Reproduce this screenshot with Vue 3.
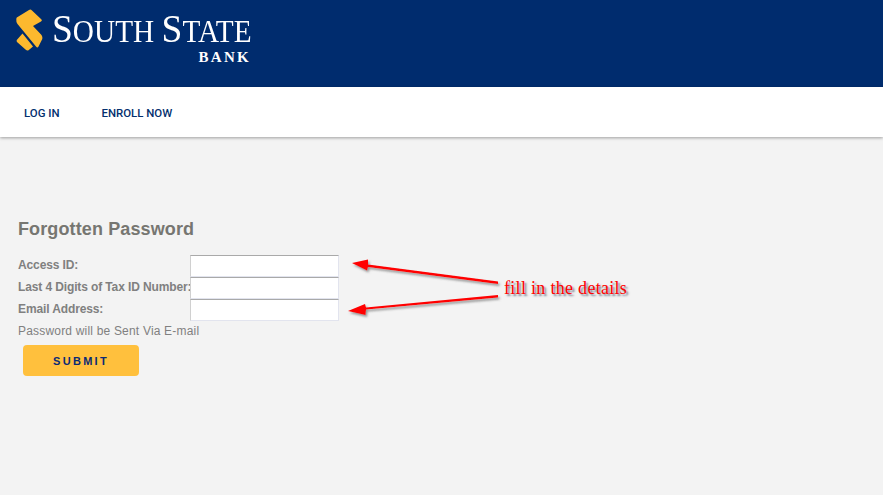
<script setup>
const fields = [
  { label: 'Access ID:', id: 'access' },
  { label: 'Last 4 Digits of Tax ID Number:', id: 'tax' },
  { label: 'Email Address:', id: 'email' }
]
</script>

<template>
  <div class="page">
    <header class="banner">
      <div class="logo">
        <svg class="mark" width="28" height="42" viewBox="0 0 28 42" aria-hidden="true">
          <path d="M0.800 8.500 L13 1 Q14.500 0 16 1.500 L25.500 10.500 Q26.500 11.500 25 12.500 L17 17 L25.500 26 Q26.800 28 26.300 30 L22.500 37.500 Q21.500 39.500 20 37.500 L1.500 15 Q0 13 0.300 10.500 Q0.300 9 0.800 8.500 Z" fill="#fdb92e"/>
          <path d="M0.800 31 L6.500 24.500 L17 37.500 L12.500 41.300 Q11 42 9.500 40.500 L1 33 Q0.300 32 0.800 31 Z" fill="#fdb92e"/>
        </svg>
        <div class="wordmark">
          <div class="name"><span class="cap">S</span>OUTH <span class="cap">S</span>TATE</div>
          <div class="bank">BANK</div>
        </div>
      </div>
    </header>
    <nav class="nav">
      <a class="nav-link">LOG IN</a>
      <a class="nav-link">ENROLL NOW</a>
    </nav>
    <main class="content">
      <h1 class="title">Forgotten Password</h1>
      <form class="form" @submit.prevent>
        <div v-for="f in fields" :key="f.id" class="row">
          <label class="label" :for="f.id">{{ f.label }}</label>
          <input :id="f.id" class="input" type="text" />
        </div>
      </form>
      <p class="note">Password will be Sent Via E-mail</p>
      <button class="submit" type="button">SUBMIT</button>
    </main>

    <svg class="arrows" width="883" height="495" viewBox="0 0 883 495" aria-hidden="true">
      <defs>
        <filter id="sh" x="-10%" y="-50%" width="120%" height="220%">
          <feDropShadow dx="1.500" dy="2" stdDeviation="1.200" flood-color="#555" flood-opacity="0.6"/>
        </filter>
      </defs>
      <g fill="#ff0000" stroke="none" filter="url(#sh)">
        <path d="M498 284 L368 267 L367 270.500 L352 263 L368 259.500 L368 264.500 L498 281.500 Z"/>
        <path d="M498 297.500 L366 309.500 L365.500 315 L348 311 L365 304 L366 307.500 L498 295 Z"/>
      </g>
    </svg>
    <div class="annotation">fill in the details</div>
  </div>
</template>

<style scoped>
.page {
  position: relative;
  width: 883px;
  height: 495px;
  overflow: hidden;
  background: #f3f3f3;
  font-family: "Liberation Sans", Arial, sans-serif;
}
.banner {
  height: 87px;
  background: #002c6e;
  padding: 9px 0 0 16px;
  box-sizing: border-box;
}
.logo {
  display: flex;
  align-items: flex-start;
  gap: 8px;
}
.mark {
  display: block;
  flex: none;
}
.wordmark {
  width: 198px;
  color: #fff;
  font-family: "Liberation Serif", "Times New Roman", serif;
  text-align: right;
  margin-top: 0;
}
.name {
  font-size: 32px;
  line-height: 38px;
  white-space: nowrap;
  text-align: left;
  transform: scaleX(0.915);
  transform-origin: left center;
}
.cap {
  font-size: 41px;
}
.bank {
  font-size: 15px;
  font-weight: bold;
  line-height: 14px;
  letter-spacing: 2.300px;
  margin-top: 0;
  margin-right: -1px;
}
.nav {
  height: 50px;
  background: #fff;
  box-shadow: 0 1px 3px rgba(0, 0, 0, 0.35);
  display: flex;
  align-items: center;
  gap: 42px;
  padding: 2px 0 0 24px;
  box-sizing: border-box;
  position: relative;
}
.nav-link {
  color: #03306e;
  font-family: Roboto, "Liberation Sans", sans-serif;
  font-size: 11.400px;
  font-weight: 500;
}
.content {
  padding: 81px 0 0 18px;
}
.title {
  margin: 0 0 15px;
  font-size: 18px;
  line-height: 22px;
  font-weight: bold;
  letter-spacing: 0.120px;
  color: #767671;
}
.form {
  margin: 0;
}
.row {
  display: flex;
  height: 22px;
  align-items: flex-start;
}
.label {
  width: 172px;
  flex: none;
  font-size: 12px;
  line-height: 20px;
  font-weight: bold;
  letter-spacing: -0.120px;
  color: #808080;
  white-space: nowrap;
}
.input {
  width: 149px;
  height: 22px;
  box-sizing: border-box;
  margin: 0;
  padding: 0 2px;
  background: #fff;
  border: 1px solid #e2e4ee;
  border-top-color: #a9a9a9;
  border-left-color: #d0d0d0;
  outline: none;
}
.note {
  margin: 2px 0 0;
  font-size: 12px;
  line-height: 16px;
  letter-spacing: 0.190px;
  color: #808080;
}
.submit {
  display: block;
  margin: 6px 0 0 5px;
  width: 116px;
  height: 31px;
  border: none;
  border-radius: 4px;
  background: #ffc03d;
  color: #0b2a74;
  font-family: "Liberation Sans", Arial, sans-serif;
  font-size: 11px;
  font-weight: bold;
  letter-spacing: 2.300px;
}
.arrows {
  position: absolute;
  left: 0;
  top: 0;
  pointer-events: none;
}
.annotation {
  position: absolute;
  left: 504px;
  top: 278px;
  color: #ff0000;
  font-family: "Liberation Serif", "Times New Roman", serif;
  font-size: 18px;
  line-height: 20px;
  letter-spacing: 0.300px;
  white-space: nowrap;
  text-shadow: 2px 2px 2px rgba(70, 80, 100, 0.7);
}
</style>
